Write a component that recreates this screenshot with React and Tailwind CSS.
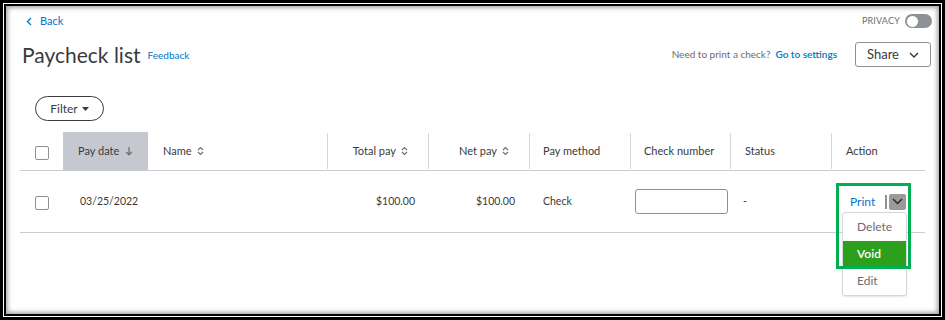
import React from "react";

const F = { fontFamily: "Lato, 'Liberation Sans', sans-serif" };

function Sort() {
  return (
    <svg width="7" height="10" viewBox="0 0 7 10" className="inline-block ml-[5px]">
      <path d="M1 4 L3.5 1.5 L6 4 M1 6 L3.5 8.5 L6 6" fill="none" stroke="#6b6c72" strokeWidth="1.1" />
    </svg>
  );
}

function Box() {
  return <div className="w-[14px] h-[14px] border border-[#8d9096] rounded-[2px] bg-white" />;
}

export default function App() {
  return (
    <div className="w-[945px] h-[320px] bg-black p-[3px]" style={F}>
      <div className="w-full h-full bg-white p-[1px]">
        <div className="w-full h-full bg-black p-[2px]">
          <div className="relative w-full h-full bg-white px-[14px] shadow-[inset_0_0_4px_2px_rgba(0,0,0,0.35)]">
            {/* top bar */}
            <div className="h-[30px] flex items-center justify-between">
              <div className="flex items-center gap-[8px] pl-[6px] text-[11px] text-[#0077c5]">
                <svg width="6" height="9" viewBox="0 0 6 9"><path d="M5 1 L1.5 4.5 L5 8" fill="none" stroke="#0077c5" strokeWidth="1.3" /></svg>
                <span>Back</span>
              </div>
              <div className="flex items-center gap-[5px] pr-[-7px] mr-[-7px]">
                <span className="text-[9px] text-[#6b6c72] tracking-[0.2px]">PRIVACY</span>
                <div className="w-[27px] h-[14px] rounded-full bg-[#8d9096] flex items-center p-[1px]">
                  <div className="w-[13px] h-[13px] rounded-full bg-white border border-[#8d9096]" />
                </div>
              </div>
            </div>
            {/* title row */}
            <div className="mt-[6px] h-[25px] flex items-center justify-between">
              <div className="flex items-center gap-[7px] pl-[2px]">
                <span className="text-[21px] leading-none text-[#393a3d]">Paycheck list</span>
                <span className="text-[10px] text-[#0077c5] mt-[2px]">Feedback</span>
              </div>
              <div className="flex items-center">
                <span className="text-[10px] text-[#6b6c72]">Need to print a check?</span>
                <span className="text-[10px] text-[#0077c5] ml-[5px] font-semibold">Go to settings</span>
                <div className="ml-[18px] mr-[-6px] w-[76px] h-[25px] border border-[#8d9096] rounded-[3px] flex items-center justify-center gap-[10px]">
                  <span className="text-[13px] text-[#393a3d]">Share</span>
                  <svg width="10" height="6" viewBox="0 0 10 6"><path d="M1 1 L5 5 L9 1" fill="none" stroke="#393a3d" strokeWidth="1.4" /></svg>
                </div>
              </div>
            </div>
            {/* filter */}
            <div className="mt-[29px] ml-[15px] w-[69px] h-[25px] border border-[#393a3d] rounded-full flex items-center justify-center gap-[4px]">
              <span className="text-[12px] text-[#393a3d]">Filter</span>
              <svg width="7" height="4" viewBox="0 0 7 4"><path d="M0 0 L7 0 L3.5 4 Z" fill="#393a3d" /></svg>
            </div>
            {/* table */}
            <div className="mt-[11px] text-[11px] text-[#393a3d]">
              <div className="flex h-[39px] border-b border-[#c9ccd1]">
                <div className="w-[43px] pl-[15px] flex items-center pt-[4px]"><Box /></div>
                <div className="w-[85px] bg-[#c5c8ce] pl-[15px] flex items-center">
                  Pay date
                  <svg width="8" height="10" viewBox="0 0 8 10" className="ml-[6px]"><path d="M4 1 L4 8.5 M1.2 6 L4 8.8 L6.8 6" fill="none" stroke="#6b6c72" strokeWidth="1.2" /></svg>
                </div>
                <div className="w-[179px] pl-[15px] flex items-center">Name<Sort /></div>
                <div className="w-[101px] flex items-center justify-end pr-[20px] border-l border-[#d4d7dc] my-[1px]">Total pay<Sort /></div>
                <div className="w-[101px] flex items-center justify-end pr-[20px] border-l border-[#d4d7dc] my-[1px]">Net pay<Sort /></div>
                <div className="w-[101px] flex items-center pl-[13px] border-l border-[#d4d7dc] my-[1px]">Pay method</div>
                <div className="w-[100px] flex items-center pl-[13px] border-l border-[#d4d7dc] my-[1px]">Check number</div>
                <div className="w-[101px] flex items-center pl-[14px] border-l border-[#d4d7dc] my-[1px]">Status</div>
                <div className="flex-1 flex items-center pl-[14px] border-l border-[#d4d7dc] my-[1px]">Action</div>
              </div>
              <div className="flex h-[62px] border-b border-[#c9ccd1] text-[10.5px]">
                <div className="w-[43px] pl-[15px] flex items-center pt-[2px]"><Box /></div>
                <div className="w-[85px] pl-[17px] flex items-center">03/25/2022</div>
                <div className="w-[179px]" />
                <div className="w-[101px] flex items-center justify-end pr-[13px]">$100.00</div>
                <div className="w-[101px] flex items-center justify-end pr-[14px]">$100.00</div>
                <div className="w-[101px] flex items-center pl-[14px]">Check</div>
                <div className="w-[100px] flex items-center pl-[5px]">
                  <div className="w-[93px] h-[25px] border border-[#8d9096] rounded-[3px]" />
                </div>
                <div className="w-[101px] flex items-center pl-[13px]">-</div>
                <div className="flex-1 relative flex items-center pl-[19px]">
                  <span className="text-[12px] text-[#0077c5]">Print</span>
                  <div className="ml-[10px] w-[2px] h-[14px] bg-[#8d9096]" />
                  <div className="ml-[2px] w-[17px] h-[16px] bg-[#9a9a9a] rounded-[2px] flex items-center justify-center">
                    <svg width="11" height="7" viewBox="0 0 11 7"><path d="M1 1 L5.5 5.5 L10 1" fill="none" stroke="#2b2b2b" strokeWidth="1.5" /></svg>
                  </div>
                  {/* dropdown menu */}
                  <div className="absolute left-[11px] top-[41px] w-[65px] bg-white border border-[#d4d7dc] rounded-[3px] shadow-[0_1px_2px_rgba(0,0,0,0.1)] z-10 text-[12px]">
                    <div className="h-[28px] flex items-center pl-[14px] text-[#6b6c72]">Delete</div>
                    <div className="h-[26px] flex items-center pl-[14px] bg-[#2ca01c] text-white font-semibold">Void</div>
                    <div className="h-[28px] flex items-center pl-[14px] text-[#6b6c72]">Edit</div>
                  </div>
                  {/* green highlight */}
                  <div className="absolute left-[5px] top-[12px] w-[75px] h-[86px] border-[3px] border-[#00b050] z-20 pointer-events-none" />
                </div>
              </div>
            </div>
          </div>
        </div>
      </div>
    </div>
  );
}
